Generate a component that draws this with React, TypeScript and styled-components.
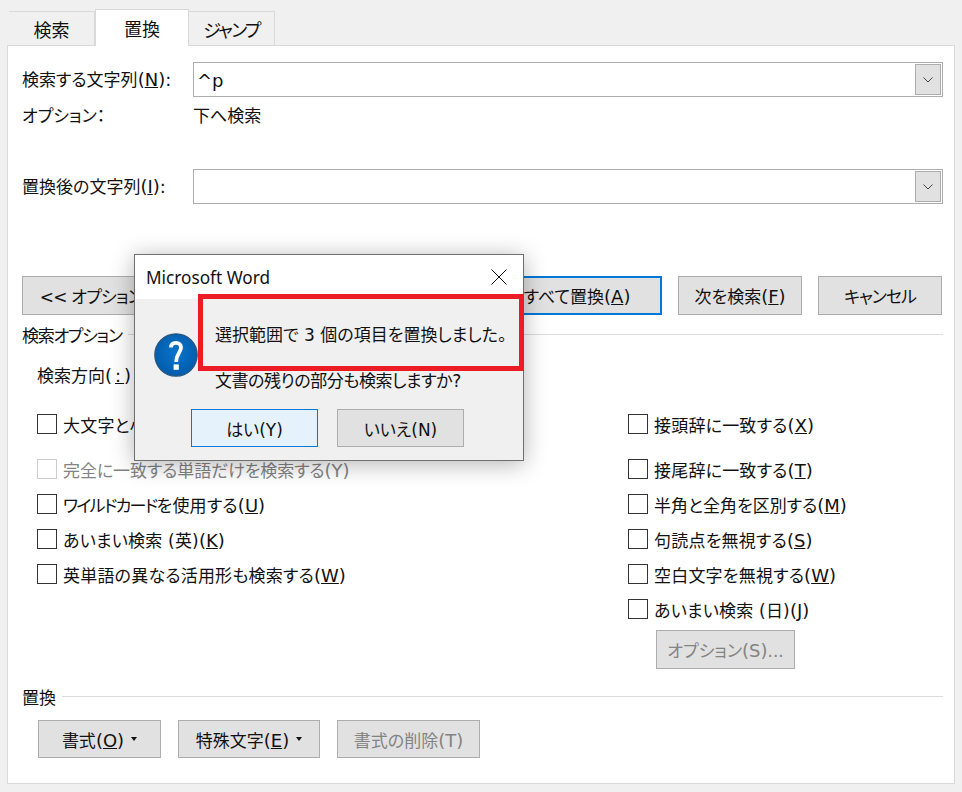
import type { ReactNode } from 'react'
import { createGlobalStyle, styled } from 'styled-components'

const GlobalStyle = createGlobalStyle`
  html, body {
    margin: 0;
    padding: 0;
    background: #f0f0f0;
  }

  body {
    font-family: "DejaVu Sans", "Noto Sans CJK JP", sans-serif;
    font-size: 17px;
    font-feature-settings: "palt";
    color: #111;
  }
`

const Screen = styled.div`
  position: relative;
  width: 962px;
  height: 792px;
  overflow: hidden;
  box-sizing: border-box;
  padding: 9px 7px 0;
`

const TabBar = styled.div`
  display: flex;
  align-items: flex-end;
  height: 37px;
  padding-left: 2px;
  margin-bottom: -1px;
`

const Tab = styled.div<{ $active?: boolean; $width: number }>`
  position: relative;
  z-index: ${(p) => (p.$active ? 1 : 0)};
  display: flex;
  align-items: center;
  justify-content: center;
  box-sizing: border-box;
  width: ${(p) => p.$width}px;
  height: ${(p) => (p.$active ? 37 : 35)}px;
  background: ${(p) => (p.$active ? '#fff' : '#f0f0f0')};
  border: 1px solid #d9d9d9;
  border-bottom: ${(p) => (p.$active ? 'none' : '1px solid #d9d9d9')};
  border-left: ${(p) => (p.$active ? '1px solid #d9d9d9' : 'none')};
  font-size: 18px;
`

const Kana = styled.span<{ $track: number }>`
  letter-spacing: ${(p) => p.$track}px;
`

// the latin part of a label is a touch larger than the kana around it
const Accel = styled.span<{ $track?: number }>`
  font-size: 18px;
  line-height: 1;
  letter-spacing: ${(p) => p.$track ?? 0}px;
`

const Panel = styled.div`
  box-sizing: border-box;
  width: 948px;
  background: #fff;
  border: 1px solid #d9d9d9;
  padding: 16px 11px 25px 14px;
`

const FieldRow = styled.div<{ $top?: number }>`
  display: grid;
  grid-template-columns: 171px 1fr;
  align-items: center;
  margin-top: ${(p) => p.$top ?? 0}px;
`

const Label = styled.span`
  line-height: 24px;
  white-space: nowrap;
`

const Combo = styled.div`
  display: flex;
  align-items: center;
  justify-content: space-between;
  box-sizing: border-box;
  height: 35px;
  border: 1px solid #adadad;
  padding: 1px 1px 0 3px;
  font-size: 18px;
`

const ComboArrow = styled.div`
  display: flex;
  align-items: center;
  justify-content: center;
  box-sizing: border-box;
  width: 26px;
  height: 31px;
  margin-top: -1px;
  background: #e1e1e1;
  border: 1px solid #adadad;
  color: #444;
`

const ActionRow = styled.div`
  display: flex;
  gap: 16px;
  margin: 72px 1px 0 0;
`

const Button = styled.div<{ $width: number; $height?: number; $disabled?: boolean; $focused?: boolean; $push?: boolean }>`
  display: flex;
  align-items: center;
  justify-content: center;
  gap: 7px;
  box-sizing: border-box;
  width: ${(p) => p.$width}px;
  height: ${(p) => p.$height ?? 39}px;
  margin-right: ${(p) => (p.$push ? 'auto' : '0')};
  background: #e1e1e1;
  border: ${(p) => (p.$focused ? '2px solid #0078d7' : '1px solid #adadad')};
  color: ${(p) => (p.$disabled ? '#838383' : '#111')};
  white-space: nowrap;
`

const Caret = styled.span`
  width: 0;
  height: 0;
  border-left: 3.5px solid transparent;
  border-right: 3.5px solid transparent;
  border-top: 4px solid #111;
`

const SectionHead = styled.div<{ $top: number }>`
  display: flex;
  align-items: center;
  gap: 6px;
  height: 24px;
  margin-top: ${(p) => p.$top}px;

  &::after {
    content: '';
    flex: 1;
    height: 1px;
    background: #dcdcdc;
  }
`

const Direction = styled.div`
  margin: 18px 0 0 15px;
  line-height: 24px;
`

const OptionGrid = styled.div`
  display: grid;
  grid-template-columns: 591px 1fr;
  margin: 24px 0 0 15px;
`

const OptionColumn = styled.div`
  display: flex;
  flex-direction: column;
  gap: 11px;
`

const CheckRow = styled.div<{ $disabled?: boolean; $spaced?: boolean }>`
  display: flex;
  align-items: center;
  gap: 6px;
  height: 24px;
  margin-bottom: ${(p) => (p.$spaced ? 10 : 0)}px;
  color: ${(p) => (p.$disabled ? '#838383' : '#111')};
  letter-spacing: 0.2px;
  white-space: nowrap;
`

const Box = styled.span<{ $disabled?: boolean }>`
  flex: none;
  box-sizing: border-box;
  width: 20px;
  height: 20px;
  background: #fff;
  border: 1px solid ${(p) => (p.$disabled ? '#cccccc' : '#333333')};
`

const SubOption = styled.div`
  margin: -2px 0 0 28px;
`

const ReplaceRow = styled.div`
  display: flex;
  gap: 17px;
  margin: 12px 0 0 16px;
`

const Dialog = styled.div`
  position: absolute;
  left: 134px;
  top: 254px;
  width: 390px;
  box-sizing: border-box;
  background: #f0f0f0;
  border: 1px solid #6f6f6f;
  box-shadow: 0 3px 22px rgba(0, 0, 0, 0.3);
`

const DialogTitle = styled.div`
  display: flex;
  align-items: center;
  justify-content: space-between;
  height: 44px;
  padding: 0 16px 0 11px;
  background: #fff;
  font-family: "Noto Sans", sans-serif;
  font-size: 17.2px;
`

const DialogBody = styled.div`
  display: flex;
  align-items: flex-start;
  gap: 17px;
  padding: 24px 0 0 19px;
`

const QuestionIcon = styled.svg`
  flex: none;
  margin-top: 10px;
`

const Message = styled.div`
  display: flex;
  flex-direction: column;
  gap: 22px;
  line-height: 24px;
  white-space: nowrap;
`

const DialogButtons = styled.div`
  display: flex;
  gap: 19px;
  padding: 16px 0 13px 56px;
`

const DialogButton = styled.div<{ $primary?: boolean }>`
  display: flex;
  align-items: center;
  justify-content: center;
  box-sizing: border-box;
  width: 127px;
  height: 38px;
  background: ${(p) => (p.$primary ? '#e5f1fb' : '#e1e1e1')};
  border: 1px solid ${(p) => (p.$primary ? '#0078d7' : '#adadad')};
`

const Highlight = styled.div`
  position: absolute;
  left: 63px;
  top: 39px;
  width: 326px;
  height: 77px;
  box-sizing: border-box;
  border: 5px solid #ed1c24;
`

function Chevron() {
  return (
    <svg width="10" height="6" viewBox="0 0 10 6" fill="none" stroke="currentColor" strokeWidth="1">
      <path d="M0.5 0.5 L5 5 L9.5 0.5" />
    </svg>
  )
}

function Key({ char, plain }: { char: string; plain?: boolean }) {
  return <Accel>({plain ? char : <u>{char}</u>})</Accel>
}

function Check({ children, accel, disabled, spaced }: { children: ReactNode; accel: string; disabled?: boolean; spaced?: boolean }) {
  return (
    <CheckRow $disabled={disabled} $spaced={spaced}>
      <Box $disabled={disabled} />
      <span>
        {children}
        <Key char={accel} plain={disabled} />
      </span>
    </CheckRow>
  )
}

export default function App() {
  return (
    <Screen>
      <GlobalStyle />
      <TabBar>
        <Tab $width={86}>検索</Tab>
        <Tab $active $width={94}>
          置換
        </Tab>
        <Tab $width={86}>
          <Kana $track={-1.7}>ジャンプ</Kana>
        </Tab>
      </TabBar>

      <Panel>
        <FieldRow>
          <Label>
            検索する文字列
            <Key char="N" />
            <Accel>:</Accel>
          </Label>
          <Combo>
            <span>^p</span>
            <ComboArrow>
              <Chevron />
            </ComboArrow>
          </Combo>
        </FieldRow>
        <FieldRow $top={7}>
          <Label>オプション：</Label>
          <Label>下へ検索</Label>
        </FieldRow>
        <FieldRow $top={41}>
          <Label>
            置換後の文字列
            <Key char="I" />
            <Accel>:</Accel>
          </Label>
          <Combo>
            <span />
            <ComboArrow>
              <Chevron />
            </ComboArrow>
          </Combo>
        </FieldRow>

        <ActionRow>
          <Button $width={162} $push>
            <span>
              <Kana $track={-0.8}>&lt;&lt; オプション</Kana>
              <Key char="L" plain />
            </span>
          </Button>
          <Button $focused $width={170}>
            <span>
              すべて置換
              <Key char="A" />
            </span>
          </Button>
          <Button $width={124}>
            <span>
              次を検索
              <Key char="F" />
            </span>
          </Button>
          <Button $width={124}>
            <Kana $track={-1}>キャンセル</Kana>
          </Button>
        </ActionRow>

        <SectionHead $top={7}>
          <Kana $track={-1.3}>検索オプション</Kana>
        </SectionHead>
        <Direction>
          検索方向
          <Accel $track={3}>
            (<u>:</u>)
          </Accel>
        </Direction>

        <OptionGrid>
          <OptionColumn>
            <Check accel="H" spaced>
              大文字と小文字を区別する
            </Check>
            <Check accel="Y" disabled>
              <Kana $track={-0.1}>完全に一致する単語だけを検索する</Kana>
            </Check>
            <Check accel="U">
              <Kana $track={-1.7}>ワイルドカード</Kana>を使用する
            </Check>
            <Check accel="K">あいまい検索 (英)</Check>
            <Check accel="W">英単語の異なる活用形も検索する</Check>
          </OptionColumn>
          <OptionColumn>
            <Check accel="X" spaced>
              接頭辞に一致する
            </Check>
            <Check accel="T">接尾辞に一致する</Check>
            <Check accel="M">
              <Kana $track={0}>半角と全角を区別する</Kana>
            </Check>
            <Check accel="S">句読点を無視する</Check>
            <Check accel="W">空白文字を無視する</Check>
            <Check accel="J">あいまい検索 (日)</Check>
            <SubOption>
              <Button $disabled $width={139}>
                <span>
                  オプション
                  <Key char="S" plain />
                  ...
                </span>
              </Button>
            </SubOption>
          </OptionColumn>
        </OptionGrid>

        <SectionHead $top={15}>置換</SectionHead>
        <ReplaceRow>
          <Button $width={123} $height={38}>
            <span>
              書式
              <Key char="O" />
            </span>
            <Caret />
          </Button>
          <Button $width={142} $height={38}>
            <span>
              特殊文字
              <Key char="E" />
            </span>
            <Caret />
          </Button>
          <Button $disabled $width={143} $height={38}>
            <span>
              書式の削除
              <Key char="T" plain />
            </span>
          </Button>
        </ReplaceRow>
      </Panel>

      <Dialog>
        <DialogTitle>
          <span>Microsoft Word</span>
          <svg width="16" height="16" viewBox="0 0 16 16" stroke="#111" strokeWidth="1" fill="none">
            <path d="M0.5 0.5 L15.5 15.5 M15.5 0.5 L0.5 15.5" />
          </svg>
        </DialogTitle>
        <DialogBody>
          <QuestionIcon width="44" height="44" viewBox="0 0 44 44">
            <defs>
              <radialGradient id="q" cx="50%" cy="45%" r="60%">
                <stop offset="0%" stopColor="#0a74cc" />
                <stop offset="100%" stopColor="#005aa8" />
              </radialGradient>
            </defs>
            <circle cx="22" cy="22" r="21.2" fill="url(#q)" stroke="#27567f" strokeWidth="1.2" />
            <path d="M17 14.5 C17 11 19.3 9.8 22 9.8 C25 9.8 27 11.8 27 14.6 C27 19.8 22.2 20.2 22.2 29" fill="none" stroke="#fff" strokeWidth="3.8" />
            <rect x="19.6" y="31.4" width="5.2" height="5.4" fill="#fff" />
          </QuestionIcon>
          <Message>
            <span>選択範囲で 3 個の項目を置換しました。</span>
            <Kana $track={-0.45}>文書の残りの部分も検索しますか?</Kana>
          </Message>
        </DialogBody>
        <DialogButtons>
          <DialogButton $primary>はい(Y)</DialogButton>
          <DialogButton>いいえ(N)</DialogButton>
        </DialogButtons>
        <Highlight />
      </Dialog>
    </Screen>
  )
}
